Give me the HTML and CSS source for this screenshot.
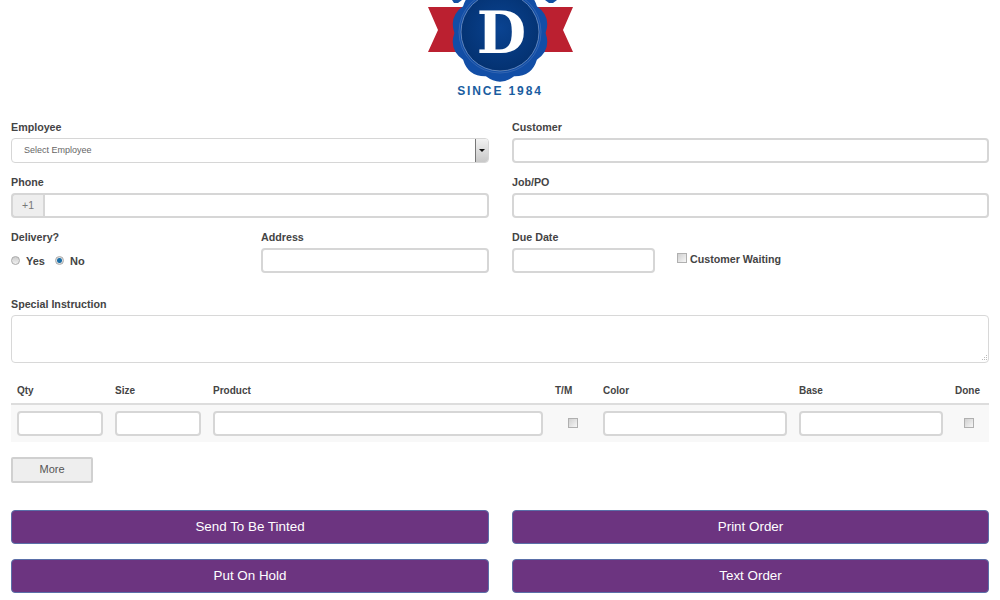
FILE: index.html
```html
<!DOCTYPE html>
<html lang="en">
<head>
    <meta charset="UTF-8">
    <meta name="viewport" content="width=device-width, initial-scale=1.0">
    <title>Tint Order</title>
    <link rel="stylesheet" href="styles.css">
</head>
<body>
    <div class="container">
        <div class="logo">
            <svg class="logo-mark" viewBox="0 0 160 82" width="160" height="82">
                <defs>
                    <radialGradient id="seal-inner" cx="50%" cy="45%" r="60%">
                        <stop offset="0" stop-color="#0a4391"/>
                        <stop offset="1" stop-color="#03306e"/>
                    </radialGradient>
                </defs>
                <path d="M8 7H50V52H8L18 30Z" fill="#bb2030"/>
                <path d="M153 7H110V52H153L143 30Z" fill="#bb2030"/>
                <path d="M32 0H42L38 3H34Z" fill="#1250a3"/>
                <path d="M125 0H137L133 3H129Z" fill="#1250a3"/>
                <path transform="translate(80 33) scale(1.06) translate(-80 -33)" d="M123 33Q128.500 48.800 114.800 58.300Q110 74.300 93.300 73.900Q80 84 66.700 73.900Q50 74.300 45.200 58.300Q31.500 48.800 37 33Q31.500 17.200 45.200 7.700Q50 -8.300 66.700 -7.900Q80 -18 93.300 -7.900Q110 -8.300 114.800 7.700Q128.500 17.200 123 33Z" fill="#124ea6"/>
                <circle cx="80" cy="32" r="41" fill="none" stroke="#3f6db5" stroke-width="0.7"/>
                <circle cx="80" cy="32" r="39" fill="url(#seal-inner)" stroke="#7f9fd0" stroke-width="0.7"/>
                <text class="logo-letter" x="81.500" y="53" text-anchor="middle">D</text>
            </svg>
            <div class="logo-since">SINCE 1984</div>
        </div>

        <form class="order-form">
            <div class="form-grid">
                <div class="field">
                    <label>Employee</label>
                    <div class="select">
                        <span class="select-text">Select Employee</span>
                        <span class="select-button"><span class="select-arrow"></span></span>
                    </div>
                </div>
                <div class="field">
                    <label>Customer</label>
                    <input type="text">
                </div>

                <div class="field">
                    <label>Phone</label>
                    <div class="input-group">
                        <span class="input-addon">+1</span>
                        <input type="text">
                    </div>
                </div>
                <div class="field">
                    <label>Job/PO</label>
                    <input type="text">
                </div>

                <div class="field-split">
                    <div class="field">
                        <label>Delivery?</label>
                        <div class="radio-row">
                            <label class="radio-label"><input type="radio" name="delivery"> Yes</label>
                            <label class="radio-label"><input type="radio" name="delivery" checked> No</label>
                        </div>
                    </div>
                    <div class="field">
                        <label>Address</label>
                        <input type="text">
                    </div>
                </div>
                <div class="field-due">
                    <div class="field due-date">
                        <label>Due Date</label>
                        <input type="text">
                    </div>
                    <label class="waiting"><input type="checkbox"> Customer Waiting</label>
                </div>
            </div>

            <div class="field instruction">
                <label>Special Instruction</label>
                <div class="textarea-wrap">
                    <textarea></textarea>
                    <svg class="grip" viewBox="0 0 6 6" width="6" height="6">
                        <path d="M5 0h1v1H5zM5 2h1v1H5zM3 2h1v1H3zM5 4h1v1H5zM3 4h1v1H3zM1 4h1v1H1z" fill="#bbb"/>
                    </svg>
                </div>
            </div>

            <table class="items">
                <thead>
                    <tr>
                        <th class="col-qty">Qty</th>
                        <th class="col-size">Size</th>
                        <th class="col-product">Product</th>
                        <th class="col-tm">T/M</th>
                        <th class="col-color">Color</th>
                        <th class="col-base">Base</th>
                        <th class="col-done">Done</th>
                    </tr>
                </thead>
                <tbody>
                    <tr>
                        <td><input type="text"></td>
                        <td><input type="text"></td>
                        <td><input type="text"></td>
                        <td class="cell-check"><input type="checkbox"></td>
                        <td><input type="text"></td>
                        <td><input type="text"></td>
                        <td class="cell-check"><input type="checkbox"></td>
                    </tr>
                </tbody>
            </table>

            <button type="button" class="more">More</button>

            <div class="actions">
                <button type="button" class="action">Send To Be Tinted</button>
                <button type="button" class="action">Print Order</button>
                <button type="button" class="action">Put On Hold</button>
                <button type="button" class="action">Text Order</button>
            </div>
        </form>
    </div>
</body>
</html>
```

FILE: styles.css
```css
* {
    margin: 0;
    padding: 0;
    box-sizing: border-box;
    font-family: 'Liberation Sans', Arial, sans-serif;
}

body {
    background: #fff;
    color: #444;
    font-size: 11px;
}

.container {
    padding: 0 11px 7px;
}

.logo {
    height: 119px;
    display: flex;
    flex-direction: column;
    align-items: center;
}

.logo-mark {
    display: block;
}

.logo-letter {
    font-family: 'DejaVu Serif', serif;
    font-weight: bold;
    font-size: 57px;
    fill: #fff;
}

.logo-since {
    margin-top: 2px;
    font-size: 12px;
    line-height: 14px;
    font-weight: bold;
    letter-spacing: 1.9px;
    color: #1a5da0;
}

.form-grid {
    display: grid;
    grid-template-columns: 478px 477px;
    column-gap: 23px;
    row-gap: 11px;
}

.field > label {
    display: block;
    height: 16px;
    margin-bottom: 3px;
    font-weight: bold;
    font-size: 10.7px;
    line-height: 16px;
}

input[type="text"], textarea {
    display: block;
    width: 100%;
    height: 25px;
    background: #fff;
    border: 2px solid #d6d6d6;
    border-radius: 4px;
}

.select {
    height: 25px;
    display: flex;
    align-items: stretch;
    border: 1px solid #d6d6d6;
    border-radius: 4px;
}

.select-text {
    flex: 1;
    padding-left: 12px;
    font-size: 9px;
    line-height: 23px;
    color: #666;
}

.select-button {
    width: 13px;
    display: flex;
    align-items: center;
    justify-content: center;
    background: linear-gradient(#f2f2f2, #c8c8c8);
    border-left: 1px solid #777;
    border-radius: 0 3px 3px 0;
}

.select-arrow {
    border-top: 3px solid #111;
    border-left: 3px solid transparent;
    border-right: 3px solid transparent;
}

.input-group {
    display: flex;
}

.input-addon {
    width: 32px;
    height: 25px;
    background: #eee;
    border: 2px solid #d6d6d6;
    border-right: none;
    border-radius: 4px 0 0 4px;
    text-align: center;
    font-size: 10.5px;
    line-height: 21px;
    color: #777;
}

.input-group input {
    flex: 1;
    border-radius: 0 4px 4px 0;
}

.field-split {
    display: grid;
    grid-template-columns: 250px 228px;
}

.radio-row {
    display: flex;
    gap: 10px;
    height: 25px;
    align-items: center;
}

.radio-label, .waiting {
    display: flex;
    align-items: center;
    font-weight: bold;
    font-size: 10.7px;
}

.radio-label {
    gap: 6px;
    font-size: 11px;
}

input[type="radio"] {
    appearance: none;
    width: 9px;
    height: 9px;
    border-radius: 50%;
    border: 1px solid #aaa;
    background: linear-gradient(#ccc, #f2f2f2);
}

input[type="radio"]:checked {
    background: radial-gradient(circle, #1b6fa8 0, #1b6fa8 2px, #e0e0e0 3px);
}

input[type="checkbox"] {
    appearance: none;
    display: block;
    width: 10px;
    height: 10px;
    border: 1px solid #b0b0b0;
    background: linear-gradient(135deg, #d0d0d0, #f6f6f6);
}

.field-due {
    display: flex;
    align-items: flex-start;
}

.due-date {
    width: 143px;
}

.waiting {
    margin-left: 22px;
    margin-top: 24px;
    gap: 3px;
}

.waiting input {
    align-self: flex-start;
}

.instruction {
    margin-top: 23px;
}

.textarea-wrap {
    position: relative;
}

.instruction textarea {
    height: 48px;
    border-width: 1px;
    border-color: #d8d8d8;
    resize: none;
}

.grip {
    position: absolute;
    right: 2px;
    bottom: 2px;
}

.items {
    width: 100%;
    margin-top: 15px;
    border-collapse: collapse;
    table-layout: fixed;
}

.items th {
    height: 26px;
    padding: 0 6px;
    text-align: left;
    font-size: 10px;
    border-bottom: 2px solid #ddd;
}

.items td {
    padding: 6px;
    background: #f8f8f8;
}

.col-qty { width: 98px; }
.col-size { width: 98px; }
.col-product { width: 342px; }
.col-tm { width: 48px; }
.col-color { width: 196px; }
.col-base { width: 156px; }
.col-done { width: 40px; }

.cell-check input {
    margin: -2px auto 0;
}

.more {
    display: block;
    width: 82px;
    height: 26px;
    margin-top: 15px;
    padding-bottom: 2px;
    background: #eee;
    border: 2px solid #d0d0d0;
    border-radius: 2px;
    color: #555;
    font-size: 11px;
}

.actions {
    display: grid;
    grid-template-columns: 478px 477px;
    column-gap: 23px;
    row-gap: 15px;
    margin-top: 27px;
}

.action {
    height: 34px;
    padding-bottom: 2px;
    background: #6c3480;
    border: 1px solid #5a6fa8;
    border-radius: 4px;
    color: #fff;
    font-size: 13.4px;
}
```
